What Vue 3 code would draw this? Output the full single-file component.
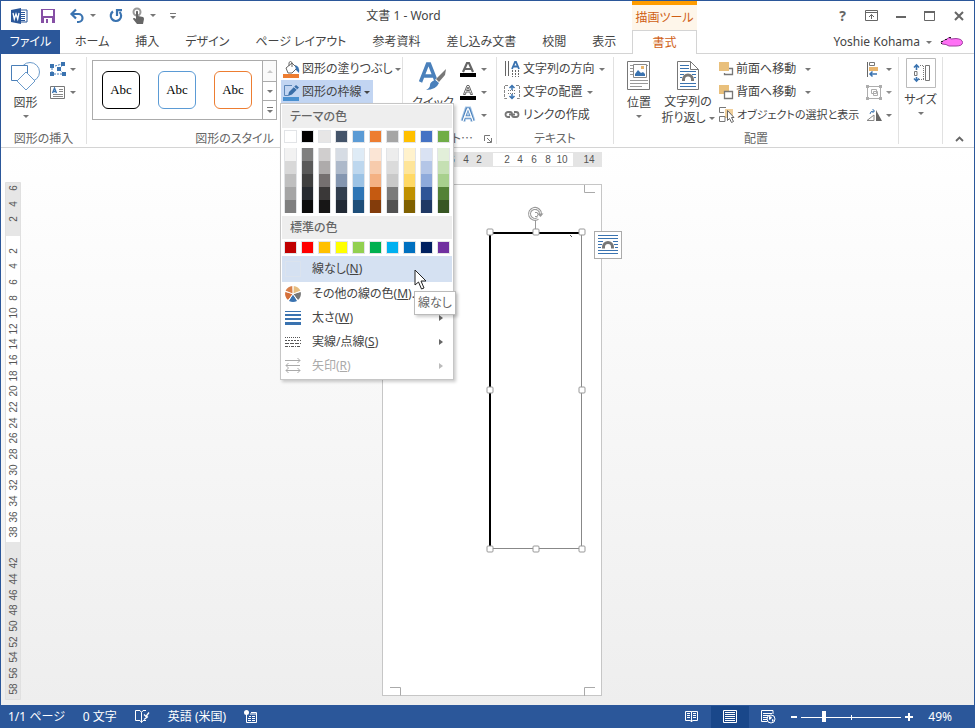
<script setup>
import { ref } from 'vue'

const tabs = ['ホーム', '挿入', 'デザイン', 'ページ レイアウト', '参考資料', '差し込み文書', '校閲', '表示']
const styles = ['black', 'blue', 'orange']
const zoom = ref(22)

const themeColors = ['#ffffff', '#000000', '#e7e6e6', '#44546a', '#5b9bd5', '#ed7d31', '#a5a5a5', '#ffc000', '#4472c4', '#70ad47']
const shades = [
  ['#f2f2f2', '#d8d8d8', '#bfbfbf', '#a5a5a5', '#7f7f7f'],
  ['#7f7f7f', '#595959', '#3f3f3f', '#262a30', '#0c0c0c'],
  ['#d0cece', '#aeabab', '#757070', '#3a3838', '#171616'],
  ['#d6dce4', '#adb9ca', '#8496b0', '#323f4f', '#222a35'],
  ['#deebf6', '#bdd7ee', '#9cc3e5', '#2e75b5', '#1e4e79'],
  ['#fbe5d5', '#f7cbac', '#f4b183', '#c55a11', '#833c0b'],
  ['#ededed', '#dbdbdb', '#c9c9c9', '#7b7b7b', '#525252'],
  ['#fff2cc', '#fee599', '#ffd965', '#bf9000', '#7f6000'],
  ['#d9e2f3', '#b4c6e7', '#8eaadb', '#2f5496', '#1f3864'],
  ['#e2efd9', '#c5e0b3', '#a8d08d', '#538135', '#375623'],
]
const standardColors = ['#c00000', '#ff0000', '#ffc000', '#ffff00', '#92d050', '#00b050', '#00b0f0', '#0070c0', '#002060', '#7030a0']

const hMarks = [-6, -4, -2, 2, 4, 6, 8, 10, 14].map(n => ({ n: Math.abs(n), at: Math.round(111 + n * 6.85) }))
const vMarks = [-6, -4, -2, 2, 4, 6, 8, 10, 12, 14, 16, 18, 20, 22, 24, 26, 28, 30, 32, 34, 36, 38, 42, 44, 46, 48, 50, 52, 54, 56, 58]
  .map(n => ({ n: Math.abs(n), at: Math.round(53 + n * 7.82) }))
const handles = [[8, 20], [54, 20], [100, 20], [8, 178], [100, 178], [8, 337], [54, 337], [100, 337]]
</script>

<template>
  <div class="window">
    <header class="frame-row title-row">
      <div class="title-left">
        <div class="qat">
          <svg class="word-logo" width="17" height="16" viewBox="0 0 17 16"><path d="M8 2h8v12H8z" fill="#fff" stroke="#2b579a"/><path d="M10 4.500h4M10 6.500h4M10 8.500h4M10 10.500h4M10 12.500h4" stroke="#2b579a"/><path d="M0 2l10-2v16L0 14z" fill="#2b579a"/><path d="M2 5l1.300 6L5 6l1.700 5L8 5" fill="none" stroke="#fff" stroke-width="1.300"/></svg>
          <button class="q-save" aria-label="上書き保存"><svg width="14" height="14"><path d="M0 0h14v14H0z" fill="#8650a5"/><path d="M2 1h10v6H2zM3 9h8v5H3z" fill="#fff"/><path d="M5 10h2v4H5z" fill="#8650a5"/></svg></button>
          <button class="q-undo" aria-label="元に戻す"><svg width="15" height="14"><path d="M2 5h6.500a4 4 0 0 1 0 8H7" fill="none" stroke="#3a73b0" stroke-width="2.200"/><path d="M6 .500L1.500 5L6 9.500" fill="none" stroke="#3a73b0" stroke-width="2.200"/></svg><span class="caret"></span></button>
          <button class="q-redo" aria-label="繰り返し"><svg width="14" height="14"><path d="M4 2.500A5.200 5.200 0 1 0 10.500 3" fill="none" stroke="#3a73b0" stroke-width="2.200"/><path d="M8 7V1.200h5" fill="none" stroke="#3a73b0" stroke-width="2.200"/></svg></button>
          <button class="q-touch" aria-label="タッチ/マウス モードの切り替え"><svg width="13" height="16"><circle cx="5" cy="4" r="3.500" fill="none" stroke="#9a9a9a" stroke-width="2"/><path d="M4 3.500q1-1.500 2 0V8l5 1q1 .500 1 2l-1 5H5L1 11q0-1.500 1.500-1L4 11z" fill="#666"/></svg><span class="caret"></span></button>
          <button class="q-more" aria-label="クイック アクセス ツール バーのユーザー設定"><span class="bar"></span><span class="caret"></span></button>
        </div>
        <h1>文書 1 - Word</h1>
      </div>
      <div class="context-title">描画ツール</div>
      <div class="controls">
        <button class="help" aria-label="ヘルプ">?</button>
        <button aria-label="リボンの表示オプション"><svg width="13" height="11"><path d="M.500.500h12v10H.500zM.500 2.500h12M6.500 9V4.500M4 7l2.500-2.500L9 7" fill="none" stroke="#666"/></svg></button>
        <button aria-label="最小化"><svg width="10" height="10"><path d="M0 5h10v2H0z" fill="#666"/></svg></button>
        <button aria-label="最大化"><svg width="11" height="10"><path d="M.500 1v8.500h10V1" fill="none" stroke="#666"/><path d="M0 0h11v2H0z" fill="#666"/></svg></button>
        <button aria-label="閉じる"><svg width="10" height="10"><path d="M1 1l8 8M9 1L1 9" stroke="#666" stroke-width="2"/></svg></button>
      </div>
    </header>

    <nav class="frame-row tab-row">
      <div class="tabs">
        <button class="file">ファイル</button>
        <button v-for="t in tabs" :key="t" class="tab">{{ t }}</button>
      </div>
      <button class="tab-active">書式</button>
      <div class="user">
        <button>Yoshie Kohama<span class="caret"></span></button>
        <svg width="23" height="10"><path d="M1 5L4 3.500 7 2l2-1.500L11 2l5-.500q6.500.500 6.500 4T16 9H9L6 7.500 2 7z" fill="#ff70f5" stroke="#a040a0"/><path d="M1 4.500h2M5 2.500h2M9 .500h2M1 6.500h1" stroke="#222"/></svg>
      </div>
    </nav>

    <section class="ribbon">
      <div class="group g-insert">
        <div class="body">
          <button class="big shapes"><svg width="30" height="30"><circle cx="19" cy="11" r="9.500" fill="#fff" stroke="#6c9bcb"/><path d="M.500 4.500h16v15H.500z" fill="#fff" stroke="#4a7fb8"/><path d="M15 11l9 9-9 9-9-9z" fill="#fff" stroke="#6c9bcb"/></svg><span>図形</span><i class="caret"></i></button>
          <div class="rows">
            <button class="row" aria-label="図形の編集"><svg width="16" height="14"><path d="M2 11V4M4 12h9M13 11L9 7l5-5M5 4l7-2" fill="none" stroke="#4a7fb8" stroke-dasharray="2 1"/><path d="M0 2h4v4H0zM11 0h4v4h-4zM7 5h4v4H7zM0 10h4v4H0zM12 10h4v4h-4z" fill="#3a73b0"/></svg><i class="caret"></i></button>
            <button class="row" aria-label="テキスト ボックスの描画"><svg width="16" height="13"><path d="M.500.500h14v12H.500z" fill="#fff" stroke="#777"/><path d="M9 3.500h4M9 5.500h4M3 8.500h10M3 10.500h10" stroke="#888"/><path d="M2.500 7l2-5 2 5M3 5.500h3" fill="none" stroke="#3a73b0" stroke-width="1.300"/></svg><i class="caret"></i></button>
          </div>
        </div>
        <div class="label">図形の挿入</div>
      </div>

      <div class="group g-style">
        <div class="body">
          <div class="gallery">
            <div class="samples"><button v-for="s in styles" :key="s" :class="['sample', s]">Abc</button></div>
            <div class="scroll">
              <button class="off" aria-label="前の行"><i class="caret up"></i></button>
              <button aria-label="次の行"><i class="caret"></i></button>
              <button aria-label="その他"><i class="bar"></i><i class="caret"></i></button>
            </div>
          </div>
          <div class="rows">
            <button class="row"><svg width="17" height="17"><path d="M0 13h16v4H0z" fill="#ed7d31"/><path d="M3 7l6-5 5 5-5 5H5z" fill="#fff" stroke="#666"/><path d="M6 5V1.500q1.500-2 3 0V6" fill="none" stroke="#666"/><path d="M12 4q5 1 4 8l-3-3z" fill="#3a73b0"/></svg>図形の塗りつぶし<i class="caret"></i></button>
            <div class="anchor">
              <button class="row pressed"><svg width="17" height="17"><path d="M0 13h16v4H0z" fill="#4a90d0"/><path d="M9 1.500H1.500v10H5" fill="none" stroke="#5c86b8"/><path d="M5 12l1-4 7-7 3 2.500-7 7z" fill="#3a6ea8"/><path d="M11 3l3 2.500" stroke="#c2d5f2"/></svg>図形の枠線<i class="caret dark"></i></button>
              <div class="menu">
                <h2>テーマの色</h2>
                <div class="swatches"><button v-for="c in themeColors" :key="c" class="swatch" :aria-label="c" :style="{ backgroundColor: c }"></button></div>
                <div class="swatches shades">
                  <div v-for="(col, i) in shades" :key="i" class="shade-col"><button v-for="c in col" :key="c" :aria-label="c" :style="{ backgroundColor: c }"></button></div>
                </div>
                <h2>標準の色</h2>
                <div class="swatches"><button v-for="c in standardColors" :key="c" class="swatch" :aria-label="c" :style="{ backgroundColor: c }"></button></div>
                <div class="anchor none-item">
                  <button class="item hover"><span class="no-color"></span><span>線なし(<u>N</u>)</span></button>
                  <svg class="pointer" width="13" height="21"><path d="M1 1v15l3.500-3 3 7 2.500-1-3-7H12z" fill="#fff" stroke="#222"/></svg>
                  <div class="tooltip" role="tooltip">線なし</div>
                </div>
                <button class="item"><svg width="16" height="16"><path d="M8 8L7.500 0A8 8 0 0 0 .500 5z" fill="#d9804a"/><path d="M8 8L.300 6A8 8 0 0 0 3 14z" fill="#d5703a"/><path d="M8 8L4 15q4 2 8 0z" fill="#3a73b0"/><path d="M8 8l5 6a8 8 0 0 0 2.700-8z" fill="#777"/><path d="M8 8l7.500-3A8 8 0 0 0 8.500 0z" fill="#e6bd80"/><path d="M8 8V0M8 8L0 5M8 8l-5 7M8 8l5 7M8 8l8-3" stroke="#fff"/></svg><span>その他の線の色(<u>M</u>)...</span></button>
                <button class="item"><svg width="16" height="16"><path d="M0 1h16v1H0zM0 4h16v2H0zM0 8h16v2H0zM0 12h16v3H0z" fill="#3a73b0"/></svg><span>太さ(<u>W</u>)</span><i class="arrow"></i></button>
                <button class="item"><svg width="16" height="16"><path d="M0 3.500h16" stroke="#555" stroke-dasharray="1 1"/><path d="M0 6.500h16" stroke="#555" stroke-dasharray="2 1"/><path d="M0 9.500h16" stroke="#555" stroke-dasharray="4 1"/><path d="M0 12.500h16" stroke="#555" stroke-dasharray="3 1 1 1"/></svg><span>実線/点線(<u>S</u>)</span><i class="arrow"></i></button>
                <button class="item" disabled><svg width="16" height="16"><path d="M0 2.500h15M12.500 0L15 2.500 12.500 5M1 7.500h14M3.500 5L1 7.500 3.500 10M1 12.500h14M3.500 10L1 12.500 3.500 15M12.500 10l2.500 2.500-2.500 2.500" fill="none" stroke="#aaa"/></svg><span>矢印(<u>R</u>)</span><i class="arrow"></i></button>
              </div>
            </div>
          </div>
        </div>
        <div class="label">図形のスタイル</div>
      </div>

      <div class="group g-art">
        <div class="body">
          <button class="big quick"><svg width="30" height="30"><path d="M2.500 21L9.500 3h2l7 18M5.500 15h10" fill="none" stroke="#4a80bb" stroke-width="3.500"/><path d="M29 7l-1 8-7 7-4-3 7-8z" fill="#fff"/><path d="M28 8l-1 6-6 7-3-3 6-6z" fill="#777"/><path d="M17 19l4 3q-3 7-13 7 4-2 4-5t5-5z" fill="#4a80bb"/></svg><span>クイック</span></button>
          <div class="rows">
            <button class="row" aria-label="文字の塗りつぶし"><svg width="16" height="15"><path d="M3 10L7 1h2l4 9M5 7h6" fill="none" stroke="#666" stroke-width="2.200"/><path d="M0 11h16v4H0z"/></svg><i class="caret"></i></button>
            <button class="row" aria-label="文字の輪郭"><svg width="16" height="15"><path d="M3.500 9.500L7 .500h2l3.500 9h-2L10 7H6l-.500 2.500zM6.500 5.500h3L8 2z" fill="#fff" stroke="#666"/><path d="M0 11h16v4H0z"/></svg><i class="caret"></i></button>
            <button class="row" aria-label="文字の効果"><svg width="16" height="16"><path d="M3 14L7 2h2l4 12M5 10h6" fill="none" stroke="#a9c8e8" stroke-width="5"/><path d="M3 14L7 2h2l4 12M5 10h6" fill="none" stroke="#4a80bb" stroke-width="3"/><path d="M3 14L7.500 2h1L13 14M5 10h6" fill="none" stroke="#fff" stroke-width="1.300"/></svg><i class="caret"></i></button>
          </div>
        </div>
        <div class="label"><span>ワードアート⋯</span><button aria-label="ワードアートのスタイルの設定"><svg width="8" height="8"><path d="M.500 6V.500H6M3 3l4 4M7.500 3v4.500H3" fill="none" stroke="#777"/></svg></button></div>
      </div>

      <div class="group g-text">
        <div class="body">
          <div class="rows">
            <button class="row"><svg width="16" height="16"><path d="M1.500 0v15M4.500 0v15" stroke="#666"/><path d="M8.500 9v7M11.500 9v7M14.500 9v7" stroke="#666" stroke-dasharray="2 1"/><path d="M8 8l3-7h1l3 7M9 5.500h5" fill="none" stroke="#3a73b0" stroke-width="1.800"/></svg>文字列の方向<i class="caret"></i></button>
            <button class="row"><svg width="16" height="16"><path d="M4 1.500H.500v13H4M12 1.500h3.500v13H12" fill="none" stroke="#888" stroke-dasharray="3 1"/><path d="M4 6.500h8M4 9.500h8" stroke="#777" stroke-dasharray="1 1"/><path d="M8 6V2M5.500 4L8 1.500 10.500 4M8 10v4M5.500 12L8 14.500l2.500-2.500" fill="none" stroke="#3a73b0" stroke-width="1.500"/></svg>文字の配置<i class="caret"></i></button>
            <button class="row"><svg width="16" height="8"><path d="M6 6H4a2.500 2.500 0 0 1 0-5h2q2 0 2 2M10 1h2a2.500 2.500 0 0 1 0 5h-2q-2 0-2-2M5 3.500h6" fill="none" stroke="#777" stroke-width="1.800"/></svg>リンクの作成</button>
          </div>
        </div>
        <div class="label">テキスト</div>
      </div>

      <div class="group g-arrange">
        <div class="body">
          <button class="big pos"><svg width="24" height="30"><path d="M.500.500h22v28H.500z" fill="#fff" stroke="#777"/><path d="M3 4.500h18M3 7.500h3M3 10.500h3M3 13.500h3M3 19.500h18M3 22.500h18M3 25.500h12" stroke="#999"/><path d="M6.500 3.500h13v13h-13z" fill="#fff" stroke="#888"/><path d="M8 15v-2l3-4 3 3 2-1 2 2v2z" fill="#3a73b0"/><path d="M14 5h3v3h-3z" fill="#e8b56d"/></svg><span>位置</span><i class="caret"></i></button>
          <button class="big wrap"><svg width="22" height="30"><path d="M.500.500h13l8 8v20H.500z" fill="#fff" stroke="#777"/><path d="M13.500.500v8h8" fill="none" stroke="#777"/><path d="M3 4.500h9M3 7.500h9M3 10.500h16M3 13.500h4M15 13.500h4M3 16.500h2M17 16.500h2M3 22.500h16M3 25.500h16" stroke="#3a73b0"/><path d="M6.500 20v-1.500a4.500 4.500 0 0 1 9 0V20" fill="none" stroke="#777" stroke-width="3"/></svg><span>文字列の</span><span class="line">折り返し<i class="caret"></i></span></button>
          <div class="rows order">
            <button class="row spaced"><svg width="16" height="16"><path d="M8 7.500h5.500v6H5.500V12" fill="none" stroke="#777" stroke-width="1.300"/><path d="M0 1h10v9H0z" fill="#e9c07c"/></svg>前面へ移動<i class="caret"></i></button>
            <button class="row spaced"><svg width="16" height="16"><path d="M0 1h10v9H0z" fill="#e9c07c"/><path d="M5.500 7.500h8v7h-8z" fill="#fff" stroke="#777" stroke-width="1.300"/></svg>背面へ移動<i class="caret"></i></button>
            <button class="row select-pane"><svg width="16" height="16"><path d="M6 2h8v9H6z" fill="#f0cf9b"/><path d="M7 .500H.500v5H5M.500 9.500H6v5H.500z" fill="none" stroke="#777"/><path d="M8.500 3.500v10l2-2 2 4 2-1-2-4h2.500z" fill="#fff" stroke="#666"/></svg>オブジェクトの選択と表示</button>
          </div>
          <div class="rows">
            <button class="row" aria-label="配置"><svg width="16" height="15"><path d="M1.500 0v15" stroke="#666"/><path d="M3.500.500h5v3h-5z" fill="none" stroke="#777"/><path d="M3 5h9v4H3z" fill="#e9b56d"/><path d="M11 12H4M6.500 9.500L4 12l2.500 2.500" fill="none" stroke="#3a73b0" stroke-width="1.500"/></svg><i class="caret"></i></button>
            <button class="row off" aria-label="グループ化"><svg width="16" height="15"><path d="M2 1.500h12M1.500 3v9M14.500 3v9M3 13.500h10M5.500 4.500h5v4h-5zM7.500 6.500h4v4h-4z" fill="none" stroke="#999"/><path d="M0 0h3v3H0zM13 0h3v3h-3zM0 12h3v3H0zM13 12h3v3h-3z" fill="#999"/></svg><i class="caret"></i></button>
            <button class="row" aria-label="回転"><svg width="16" height="13"><path d="M1 11.500h7V6z" fill="#fff" stroke="#888"/><path d="M10 1l6 11h-6z" fill="#666"/><path d="M4 5q0-3 4-3M6.500 0l2 2-2 2" fill="none" stroke="#3a73b0"/></svg><i class="caret"></i></button>
          </div>
        </div>
        <div class="label">配置</div>
      </div>

      <div class="group g-size">
        <div class="body">
          <button class="big size"><svg width="30" height="30"><path d="M.500.500h29v29H.500z" fill="#fff" stroke="#bbb"/><path d="M11 13.500H8.500v4H11z" fill="none" stroke="#777"/><path d="M14 7.500h4M13 21.500h5M17.500 8v14" fill="none" stroke="#777" stroke-dasharray="1 1"/><path d="M19.500 7.500h4v15h-4z" fill="none" stroke="#777"/><path d="M10.500 12V7M8 9.500L10.500 7 13 9.500M10.500 19v4M8 20.500l2.500 2.500 2.500-2.500" fill="none" stroke="#3a73b0" stroke-width="1.600"/></svg><span>サイズ</span><i class="caret"></i></button>
        </div>
      </div>
      <button class="collapse" aria-label="リボンを折りたたむ"><svg width="9" height="6"><path d="M1 5l3.500-3.500L8 5" fill="none" stroke="#666" stroke-width="1.800"/></svg></button>
    </section>

    <main class="workspace">
      <svg class="v-ruler" width="16" height="518">
        <path d="M.500.500h15v517H.500z" fill="#e6e6e6" stroke="#e0e0e0"/><path d="M1 54h14v306H1z" fill="#fff"/>
        <g class="ruler-text"><text v-for="m in vMarks" :key="m.at" :transform="`translate(12 ${m.at}) rotate(-90)`">{{ m.n }}</text></g>
      </svg>
      <div class="canvas">
        <svg class="h-ruler" width="220" height="15">
          <path d="M0 0h220v15H0z" fill="#e4e4e4"/><path d="M111 1h80v13h-80z" fill="#fff"/>
          <g class="ruler-text"><text v-for="m in hMarks" :key="m.at" :x="m.at" y="11">{{ m.n }}</text></g>
        </svg>
        <div class="page">
          <svg class="marks" width="218" height="510"><path d="M201.500 0v7.500H212M7 502.500h10.500v8M201.500 511v-8.500H212" fill="none" stroke="#aaa"/></svg>
          <svg class="shape" width="108" height="345">
            <path d="M99.500 20.500v316H8" fill="none" stroke="#888"/><path d="M8 337V21h91" fill="none" stroke="#000" stroke-width="2"/>
            <path d="M53.500 8v9" stroke="#999"/>
            <path d="M88 23l2 2" stroke="#555"/>
            <rect v-for="(p, i) in handles" :key="i" :x="p[0] - 3" :y="p[1] - 3" width="6" height="6" rx="1" fill="#fff" stroke="#999"/>
          </svg>
          <svg class="rotate" width="16" height="14"><path d="M12.500 7a5.500 5.500 0 1 0-2.500 4.500" fill="none" stroke="#999" stroke-width="3"/><path d="M12.500 7a5.500 5.500 0 1 0-2.500 4.500" fill="none" stroke="#fff"/><path d="M7 5.500q3-1 3 2t-3 2" fill="none" stroke="#999"/><path d="M9 6.500h6.500L12.500 10z" fill="#999"/></svg>
          <button class="layout-options" aria-label="レイアウト オプション"><svg width="20" height="20"><path d="M0 .500h20M0 3.500h20M0 6.500h5M15 6.500h5M0 9.500h4M16 9.500h4M0 12.500h3M17 12.500h3M0 15.500h20M0 18.500h20" stroke="#3a73b0"/><path d="M5.500 13.500V12a4.500 4.500 0 0 1 9 0v1.500" fill="none" stroke="#777" stroke-width="3"/></svg></button>
        </div>
      </div>
    </main>

    <footer class="status">
      <div class="status-left">
        <button>1/1 ページ</button><button>0 文字</button>
        <button aria-label="校正"><svg width="15" height="13"><path d="M6.500 2.500L5 .500H.500v10H5l1.500 2 1.500-2h3M6.500 2.500v10M6.500 2.500L8 .500h3" fill="none" stroke="#fff"/><path d="M9 4.500l2 2 3-4M9 9.500l4-3" fill="none" stroke="#fff" stroke-width="1.300"/></svg></button>
        <button>英語 (米国)</button>
        <button aria-label="マクロの記録"><svg width="13" height="13"><path d="M2.500 4v8.500h10v-10H7M5 6.500h2M8 6.500h3M4 8.500h3M8 8.500h3M4 10.500h3M8 10.500h3M6 4h6" fill="none" stroke="#fff"/><circle cx="2.500" cy="2.500" r="2.500" fill="#fff"/></svg></button>
      </div>
      <div class="status-right">
        <button class="view" aria-label="閲覧モード"><svg width="14" height="13"><path d="M6.500 1.500H.500v9h5l1 1.500 1-1.500h5v-9h-6V12M2 3.500h3M2 5.500h3M2 7.500h3M8 3.500h3M8 5.500h3M8 7.500h3" fill="none" stroke="#fff"/></svg></button>
        <button class="view on" aria-label="印刷レイアウト"><svg width="14" height="13"><path d="M.500.500h13v12H.500zM2 2.500h10M2 4.500h10M2 6.500h10M2 8.500h10M2 10.500h10" fill="none" stroke="#fff"/></svg></button>
        <button class="view" aria-label="Web レイアウト"><svg width="15" height="14"><path d="M12 4V.500H.500v11H6M2 3.500h9M2 5.500h6M2 7.500h4M2 9.500h4" fill="none" stroke="#fff"/><circle cx="10" cy="9" r="4" fill="#2b579a" stroke="#fff"/><path d="M8 6l3 1-1 2-2 1zM11 9l2 1-2 2z" fill="#fff"/></svg></button>
        <button class="step" aria-label="縮小"><svg width="6" height="8"><path d="M0 3h6v2H0z" fill="#fff"/></svg></button>
        <input v-model="zoom" type="range" min="0" max="100" aria-label="ズーム">
        <button class="step" aria-label="拡大"><svg width="8" height="8"><path d="M0 3h8v2H0zM3 0h2v8H3z" fill="#fff"/></svg></button>
        <button class="percent">49%</button>
      </div>
    </footer>
  </div>
</template>

<style>
body { margin: 0; }
</style>

<style scoped>
.window { box-sizing: border-box; display: flex; flex-direction: column; min-height: 100vh; border: solid #2b579a; border-width: 1px 1px 0; background: #fff; color: #444; font: 12px/18px "Noto Sans", "Noto Sans CJK JP", sans-serif; font-feature-settings: "palt"; white-space: nowrap; }
.window * { box-sizing: border-box; }
svg { display: block; flex: none; overflow: visible; }
button { display: flex; align-items: center; margin: 0; padding: 0; border: 0; background: none; color: inherit; font: inherit; font-feature-settings: inherit; white-space: nowrap; }
h1, h2 { margin: 0; font: inherit; }
.caret { flex: none; width: 0; height: 0; border: solid transparent; border-width: 3px 3px 0; border-top-color: #777; }
.caret.up { border-width: 0 3px 3px; border-bottom-color: #bbb; }
.caret.dark { border-top-color: #444; }

.frame-row { display: grid; grid-template-columns: 631px 65px 1fr; }
.title-row { height: 29px; }
.title-left { display: flex; align-items: center; }
.qat { display: flex; align-items: center; width: 174px; height: 29px; padding-left: 10px; }
.qat button { gap: 5px; }
.q-save { padding-left: 13px; }
.qat .q-undo { padding-left: 15px; }
.qat .q-redo { padding-left: 13px; }
.qat .q-touch { padding-left: 9px; }
.qat .q-more { flex-direction: column; gap: 2px; padding-left: 14px; }
.bar { width: 6px; height: 1px; background: #777; }
h1 { flex: 1; text-align: center; }
.context-title { border-top: 4px solid #ff9c00; background: #fef6ea; color: #cf5e14; line-height: 25px; text-align: center; }
.controls { display: flex; justify-content: flex-end; padding-right: 1px; }
.controls button { justify-content: center; width: 29px; color: #666; }
.controls .help { font-weight: bold; font-size: 14px; }

.tab-row { height: 24px; border-bottom: 1px solid #d4d4d4; }
.tabs { display: flex; }
.file { flex: none; justify-content: center; width: 59px; margin-right: 2px; background: #2b579a; color: #fff; }
.tab { padding: 0 13px; }
.tab-active { justify-content: center; height: 24px; border: solid #d4d4d4; border-width: 1px 1px 0; background: #fff; color: #cf5e14; }
.user { display: flex; align-items: center; justify-content: flex-end; gap: 8px; padding-right: 11px; }
.user button { gap: 6px; }

.ribbon { display: flex; height: 94px; padding-top: 3px; border-bottom: 1px solid #d4d4d4; }
.group { display: flex; flex: none; flex-direction: column; height: 87px; border-right: 1px solid #e1e1e1; }
.body { display: flex; flex: none; height: 75px; }
.label { display: flex; justify-content: center; color: #666; line-height: 14px; }
.g-insert { width: 86px; }
.g-style { width: 316px; }
.g-art { width: 94px; }
.g-text { width: 117px; }
.g-arrange { width: 285px; }
.g-size { width: 44px; }
.big { flex: none; flex-direction: column; padding-top: 4px; }
.big svg { margin-bottom: 3px; }
.big > .caret { margin-top: 3px; }
.shapes { width: 49px; }
.rows { display: flex; flex-direction: column; }
.row { gap: 3px; height: 23px; padding-top: 1px; }
.row .caret { margin-left: 1px; }
.g-style .body { padding-left: 5px; }
.g-style .label { padding-right: 20px; }
.gallery { display: flex; flex: none; justify-content: space-between; width: 185px; height: 60px; margin: 3px 4px 0 0; border: 1px solid #ababab; }
.samples { display: flex; align-items: center; gap: 18px; padding-left: 9px; }
.sample { justify-content: center; width: 38px; height: 38px; border: 1px solid; border-radius: 6px; color: #000; font-family: "Liberation Serif", serif; font-size: 13px; }
.black { border-color: #000; }
.blue { border-color: #5b9bd5; }
.orange { border-color: #ed7d31; }
.scroll { display: grid; grid-template-rows: 20px 19px 19px; width: 14px; border-left: 1px solid #ababab; }
.scroll button { flex-direction: column; gap: 2px; justify-content: center; }
.scroll button + button { border-top: 1px solid #ababab; }
.scroll .off { background: #fafafa; }
.g-style .row { gap: 2px; padding: 1px 3px 0 2px; }
.g-style .row .caret { margin-left: 0; }
.anchor { position: relative; }
.pressed { background: #c2d5f2; }
.quick { width: 57px; padding-left: 3px; }
.g-art .row { gap: 4px; }
.g-art .label { justify-content: flex-end; gap: 11px; padding-right: 4px; }
.g-text .body { padding-left: 7px; }
.g-arrange .body { padding-left: 1px; }
.pos { width: 48px; }
.wrap { width: 50px; }
.wrap span { line-height: 16px; }
.wrap .line { display: flex; align-items: center; gap: 3px; }
.order { width: 153px; padding-left: 6px; }
.spaced { gap: 1px; }
.spaced .caret { margin-left: 8px; }
.select-pane { gap: 2px; font-size: 11px; }
.off { opacity: .8; }
.size { width: 43px; padding-top: 1px; }
.collapse { margin: 79px 10px auto auto; }

.menu { position: absolute; z-index: 2; top: 100%; left: -1px; width: 174px; padding: 1px; border: 1px solid #c6c6c6; background: #fff; box-shadow: 2px 2px 3px #0003; }
.menu h2 { height: 23px; padding-left: 8px; background: #eee; color: #666; font-weight: 500; line-height: 23px; }
.swatches { display: flex; gap: 4px; padding: 2px 2px 5px; }
.swatch { width: 13px; height: 13px; border: 1px solid #e2e4e7; }
.swatches.shades { padding: 0 2px 3px; }
.shade-col { width: 13px; border: solid #e2e4e7; border-width: 0 1px; }
.shade-col button { width: 11px; height: 13px; }
.none-item { margin-top: -3px; }
.item { gap: 11px; width: 100%; height: 24px; padding: 0 9px 0 3px; }
.hover { height: 26px; background: #d5e1f2; }
.item:disabled { color: #aaa; }
.no-color { width: 16px; height: 16px; border: 1px solid #dbe3ee; }
.arrow { margin-left: auto; border: solid transparent; border-width: 3px 0 3px 4px; border-left-color: #666; }
.item:disabled .arrow { border-left-color: #bbb; }
.pointer { position: absolute; z-index: 2; top: 13px; left: 132px; }
.tooltip { position: absolute; z-index: 1; top: 35px; left: 132px; padding: 2px 3px; border: 1px solid #bbb; background: #fff; color: #666; box-shadow: 2px 2px 3px #0003; }

.workspace { display: flex; flex: 1; padding: 4px 0 0 4px; background: linear-gradient(#fff, #eee); }
.v-ruler { margin-top: 30px; }
.canvas { display: flex; flex: 1; flex-direction: column; align-items: center; padding-right: 12px; }
.ruler-text { fill: #555; font: 10px "Liberation Sans", sans-serif; text-anchor: middle; }
.page { position: relative; width: 220px; height: 512px; margin: 17px 0 9px; border: 1px solid #c6c6c6; background: #fff; }
.marks { position: absolute; inset: 0; }
.shape { position: absolute; top: 27px; left: 99px; }
.rotate { position: absolute; top: 22px; left: 145px; }
.layout-options { position: absolute; top: 46px; left: 211px; justify-content: center; width: 28px; height: 28px; border: 1px solid #ababab; background: #fff; }

.status { display: flex; justify-content: space-between; height: 23px; background: #2b579a; color: #fff; }
.status-left, .status-right { display: flex; align-items: center; }
.status-left { gap: 18px; padding-left: 7px; }
.status-right { padding-right: 22px; }
.view { justify-content: center; width: 38px; height: 22px; }
.on { background: #19478a; }
.step { margin-left: 4px; }
input { width: 100px; height: 12px; margin: 0 0 0 4px; appearance: none; background: linear-gradient(#fff, #fff) 50px 4px / 1px 5px no-repeat, linear-gradient(#fff, #fff) 0 6px / 100% 1px no-repeat; }
input::-webkit-slider-thumb { width: 4px; height: 11px; appearance: none; background: #fff; }
.percent { margin-left: 15px; }
</style>
